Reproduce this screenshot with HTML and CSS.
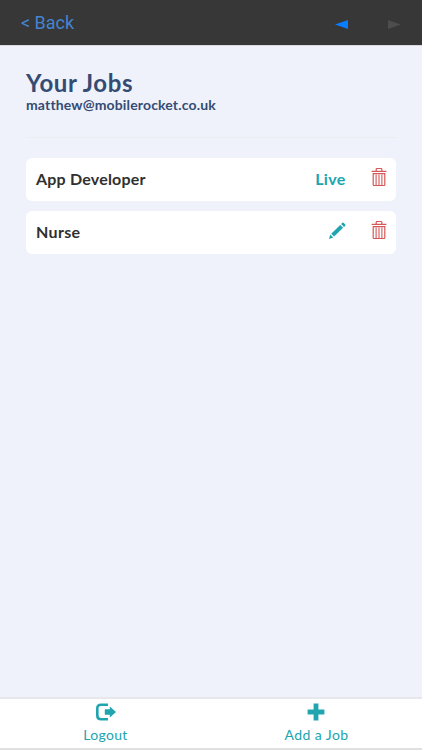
FILE: index.html
```html
<!DOCTYPE html>
<html lang="en">
<head>
    <meta charset="UTF-8">
    <meta name="viewport" content="width=device-width, initial-scale=1.0">
    <title>Your Jobs</title>
    <link rel="stylesheet" href="styles.css">
</head>
<body>
    <svg class="sprite" aria-hidden="true">
        <symbol id="trash" viewBox="0 0 16 20">
            <g fill="none" stroke="currentColor" stroke-width="1.2">
                <path d="M5.2 4V2.2Q5.2 1.5 6 1.5h4q.8 0 .8.7V4M.6 4.3h14.8"/>
                <path d="M2.2 6.6h11.6v11.2q0 .7-.7.7H2.9q-.7 0-.7-.7z"/>
                <path d="M5.1 7.5v10.5M8 7.5v10.5M10.9 7.5v10.5" stroke-width="1.1"/>
            </g>
        </symbol>
    </svg>
    <div class="container">
        <header class="topbar">
            <a class="back">&lt; Back</a>
            <div class="arrows">
                <svg class="arrow prev" viewBox="0 0 13 9"><path d="M0 4.5L13 0v9z"/></svg>
                <svg class="arrow next" viewBox="0 0 13 9"><path d="M13 4.5L0 0v9z"/></svg>
            </div>
        </header>
        <main class="content">
            <h1 class="title">Your Jobs</h1>
            <div class="email">matthew@mobilerocket.co.uk</div>
            <hr class="divider">
            <div class="job">
                <span class="job-name job-app">App Developer</span>
                <span class="status">Live</span>
                <svg class="trash"><use href="#trash"/></svg>
            </div>
            <div class="job">
                <span class="job-name">Nurse</span>
                <svg class="pencil" viewBox="0 0 18 18">
                    <path d="M13.1 2L14.4.8q.6-.5 1.1 0l1.8 1.8q.5.6 0 1.1L16 4.9zM12.2 2.9L15.1 5.8 6.1 14.6 3.2 11.7zM2.4 12.6l2.9 2.9L.9 17z"/>
                </svg>
                <svg class="trash"><use href="#trash"/></svg>
            </div>
        </main>
        <footer class="tabs">
            <a class="tab">
                <svg class="tab-icon logout" viewBox="0 0 20 18">
                    <path d="M12 1.7H5Q1.3 1.7 1.3 5.4v7.2q0 3.7 3.7 3.7h7" fill="none" stroke="currentColor" stroke-width="2.6"/>
                    <path d="M8.8 6.2h5V3.4L20 9l-6.2 5.6v-2.8h-5z" fill="currentColor"/>
                </svg>
                <span class="tab-logout">Logout</span>
            </a>
            <a class="tab">
                <svg class="tab-icon plus" viewBox="0 0 18 18">
                    <path d="M6.6.6h4.8v6h6v4.8h-6v6H6.6v-6h-6V6.6h6z" fill="currentColor"/>
                </svg>
                <span class="tab-add">Add a Job</span>
            </a>
        </footer>
    </div>
</body>
</html>
```
FILE: styles.css
```css
:root {
    --teal: #20a5af;
    --navy: #344b74;
    --red: #d65757;
    --background: #eff2fa;
}
* {
    box-sizing: border-box;
}
body {
    margin: 0;
    background: var(--background);
    font-family: Lato, "Open Sans", sans-serif;
}
.sprite {
    display: none;
}
.container {
    display: flex;
    flex-direction: column;
    height: 750px;
}
.topbar {
    display: flex;
    justify-content: space-between;
    align-items: center;
    height: 46px;
    padding: 0 21px;
    background: #373737;
    border-bottom: 1px solid #d8dadd;
}
.back {
    color: #4384d2;
    font-family: Roboto, sans-serif;
    font-size: 18px;
    line-height: 22px;
}
.arrows {
    display: flex;
    gap: 40px;
    padding-top: 3px;
}
.arrow {
    width: 13px;
    height: 9px;
}
.prev {
    fill: #087eff;
}
.next {
    fill: #4d4d4d;
}
.content {
    flex: 1;
    padding: 21px 26px 0;
}
.title {
    margin: 0;
    color: var(--navy);
    font-size: 24px;
    line-height: 31px;
    letter-spacing: 0.6px;
}
.email {
    color: var(--navy);
    font-size: 14px;
    font-weight: bold;
    line-height: 14px;
    letter-spacing: 0.15px;
}
.divider {
    height: 1px;
    margin: 25px 0 20px;
    border: none;
    background: #ebedf0;
}
.job {
    display: flex;
    align-items: center;
    height: 43px;
    margin-bottom: 10px;
    padding: 0 10px;
    background: white;
    border-radius: 6px;
}
.job-name {
    flex: 1;
    padding-bottom: 2px;
    color: #303030;
    font-size: 16px;
    font-weight: bold;
    letter-spacing: 0.35px;
}
.job-app {
    letter-spacing: 0.2px;
}
.status {
    padding-bottom: 2px;
    color: var(--teal);
    font-size: 16px;
    font-weight: bold;
    letter-spacing: 0.3px;
}
.pencil {
    width: 18px;
    height: 18px;
    margin-bottom: 4px;
    fill: var(--teal);
}
.trash {
    width: 16px;
    height: 20px;
    margin: 0 0 5px 25px;
    color: var(--red);
}
.job .trash {
    margin-right: -0.5px;
}
.tabs {
    display: flex;
    height: 53px;
    background: white;
    border-top: 2px solid #e6e8ec;
    border-bottom: 2px solid #e0e0e1;
}
.tab {
    flex: 1;
    display: flex;
    flex-direction: column;
    align-items: center;
    padding-top: 4px;
    color: var(--teal);
    font-size: 14px;
    line-height: 18px;
}
.tab-icon {
    height: 18px;
    margin-bottom: 5px;
}
.logout {
    width: 20px;
}
.plus {
    width: 18px;
    margin-right: 2px;
}
.tab-logout {
    letter-spacing: 0.3px;
}
.tab-add {
    letter-spacing: 0.45px;
}
```
